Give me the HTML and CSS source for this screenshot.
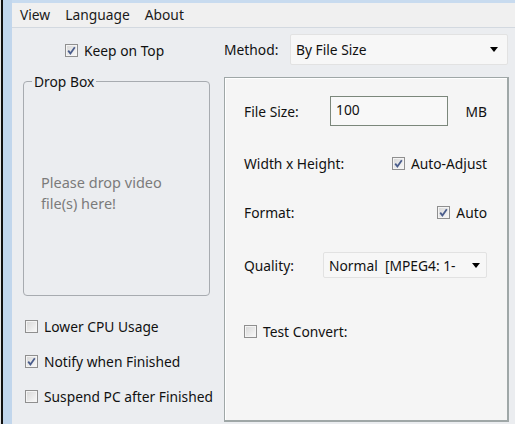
FILE: index.html
```html
<!DOCTYPE html>
<html>
<head>
<meta charset="utf-8">
<link rel="stylesheet" href="styles.css">
</head>
<body>
<div class="frame">
  <div class="edge"></div>
  <div class="side"></div>
  <div class="app">
    <div class="topline"></div>
    <div class="menubar">
      <span class="menu-item">View</span>
      <span class="menu-item">Language</span>
      <span class="menu-item">About</span>
    </div>
    <div class="content">
      <div class="left">
        <div class="keep-row">
          <label class="check"><span class="cb checked"><svg viewBox="0 0 13 13" width="13" height="13"><path d="M3.2 6.6 L5.4 9.4 L9.8 3.2" fill="none" stroke="#4a5d8c" stroke-width="1.8"/></svg></span><span>Keep on Top</span></label>
        </div>
        <fieldset class="dropbox">
          <legend>Drop Box</legend>
          <p class="hint">Please drop video<br>file(s) here!</p>
        </fieldset>
        <div class="opts">
          <label class="check"><span class="cb"></span><span>Lower CPU Usage</span></label>
          <label class="check"><span class="cb checked"><svg viewBox="0 0 13 13" width="13" height="13"><path d="M3.2 6.6 L5.4 9.4 L9.8 3.2" fill="none" stroke="#4a5d8c" stroke-width="1.8"/></svg></span><span>Notify when Finished</span></label>
          <label class="check"><span class="cb"></span><span>Suspend PC after Finished</span></label>
        </div>
      </div>
      <div class="right">
        <div class="method-row">
          <span class="method-label">Method:</span>
          <div class="combo method-combo"><span>By File Size</span><span class="arrow"></span></div>
        </div>
        <div class="panel">
          <div class="row row-size">
            <span class="lbl-size">File Size:</span>
            <div class="textbox">100</div>
            <span class="unit">MB</span>
          </div>
          <div class="row row-wh">
            <span>Width x Height:</span>
            <label class="check push"><span class="cb checked"><svg viewBox="0 0 13 13" width="13" height="13"><path d="M3.2 6.6 L5.4 9.4 L9.8 3.2" fill="none" stroke="#4a5d8c" stroke-width="1.8"/></svg></span><span>Auto-Adjust</span></label>
          </div>
          <div class="row row-fmt">
            <span>Format:</span>
            <label class="check push"><span class="cb checked"><svg viewBox="0 0 13 13" width="13" height="13"><path d="M3.2 6.6 L5.4 9.4 L9.8 3.2" fill="none" stroke="#4a5d8c" stroke-width="1.8"/></svg></span><span>Auto</span></label>
          </div>
          <div class="row row-q">
            <span class="lbl-q">Quality:</span>
            <div class="combo q-combo"><span class="q-text">Normal&nbsp; [MPEG4: 1-</span><span class="arrow"></span></div>
          </div>
          <div class="row row-test">
            <label class="check"><span class="cb"></span><span>Test Convert:</span></label>
          </div>
        </div>
      </div>
    </div>
  </div>
</div>
</body>
</html>
```
FILE: styles.css
```css
* { box-sizing: border-box; }
html, body { margin: 0; padding: 0; }
body {
  width: 515px;
  height: 424px;
  overflow: hidden;
  font-family: "Noto Sans", "Open Sans", sans-serif;
  font-size: 13.8px;
  color: #111;
  background: #ebedf0;
}
.frame { display: flex; height: 424px; }
.edge {
  width: 3px;
  border-left: 1px solid #e6e6e6;
  background: #111;
  flex: none;
}
.side { width: 9px; background: #c1d6ec; flex: none; }
.app { flex: 1; display: flex; flex-direction: column; min-width: 0; }
.topline { height: 3px; background: #c8dbef; flex: none; }
.menubar {
  height: 25px;
  background: #f0f0f0;
  border-bottom: 1px solid #d3d9e0;
  display: flex;
  align-items: center;
  padding-left: 8px;
  padding-bottom: 2px;
  gap: 15px;
  flex: none;
}
.menu-item { color: #1a1a1a; }
.content {
  flex: 1;
  display: grid;
  grid-template-columns: 212px 284px;
  min-height: 0;
}
.left { display: flex; flex-direction: column; }
.keep-row {
  height: 44px;
  display: flex;
  align-items: center;
  padding-top: 1px;
  padding-left: 53px;
}
.check { display: inline-flex; align-items: center; gap: 6px; white-space: nowrap; line-height: 19px; }
.cb {
  width: 13px; height: 13px;
  border: 1px solid #8f8f8f;
  background: linear-gradient(135deg, #d6d6d6, #fafafa);
  box-shadow: inset 0 0 0 1px #f4f4f4;
  display: inline-block;
  flex: none;
  position: relative;
}
.cb svg { position: absolute; left: -1px; top: -1px; }
.dropbox {
  margin: 0 0 0 11px;
  width: 187px;
  height: 224px;
  border: 1px solid #a7abb0;
  border-radius: 4px;
  padding: 0 0 0 17px;
}
.dropbox legend { padding: 0 2px; margin-left: -9px; color: #111; }
.hint { margin: 81px 0 0 0; color: #7b7b7b; font-size: 14.5px; line-height: 21px; }
.opts {
  display: flex;
  flex-direction: column;
  gap: 16px;
  padding: 21px 0 0 13px;
}
.right { display: flex; flex-direction: column; }
.method-row {
  height: 42px;
  display: flex;
  align-items: center;
}
.method-label { width: 66px; flex: none; }
.combo {
  display: flex;
  align-items: center;
  justify-content: space-between;
  background: #f7f7f7;
  border: 1px solid #e2e2e2;
  border-radius: 2px;
}
.method-combo { height: 31px; width: 218px; padding: 0 9px 0 5px; }
.arrow {
  width: 0; height: 0;
  border-left: 4px solid transparent;
  border-right: 4px solid transparent;
  border-top: 5px solid #000;
}
.panel {
  flex: 1;
  margin-top: 7px;
  background: #f5f5f5;
  border: 1px solid #9fa7a7;
  border-bottom-width: 2px;
  border-right-width: 2px;
  box-shadow: inset 1px 1px 0 #fff;
  padding: 18px 20px 0 19px;
  display: flex;
  flex-direction: column;
  margin-bottom: 2px;
  width: 285px;
}
.row { display: flex; align-items: center; }
.row-size { height: 30px; }
.lbl-size { width: 86px; flex: none; }
.textbox {
  width: 118px; height: 30px;
  border: 1px solid #7b877b;
  background: #f8f8f8;
  padding: 4px 5px 0;
  line-height: 18px;
}
.unit { margin-left: auto; }
.push { margin-left: auto; }
.row-wh { height: 30px; margin-top: 22px; }
.row-fmt { height: 30px; margin-top: 19px; }
.row-q { height: 26px; margin-top: 25px; }
.lbl-q { width: 79px; flex: none; }
.q-combo { flex: 1; height: 26px; padding: 0 6px 0 5px; }
.q-text { color: #111; }
.row-test { height: 30px; margin-top: 38px; }
```
